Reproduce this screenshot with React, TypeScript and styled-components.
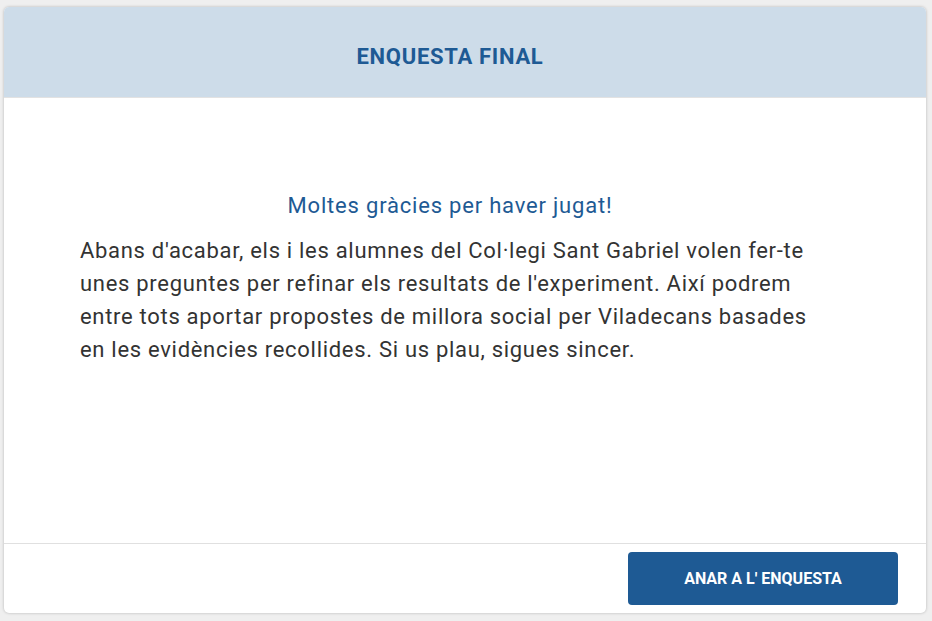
import React from "react";
import styled, { createGlobalStyle } from "styled-components";

const GlobalStyle = createGlobalStyle`
  html, body {
    margin: 0;
    padding: 0;
    background: #efefef;
    font-family: Roboto, "Noto Sans", Arial, sans-serif;
  }
`;

const Page = styled.div`
  width: 932px;
  height: 621px;
  box-sizing: border-box;
  padding: 7px 6px 8px 4px;
`;

const Card = styled.section`
  height: 100%;
  display: flex;
  flex-direction: column;
  background: #fff;
  border-radius: 5px;
  box-shadow: 0 0 3px rgba(0, 0, 0, 0.25);
  overflow: hidden;
`;

const Header = styled.header`
  height: 91px;
  flex: none;
  box-sizing: border-box;
  display: flex;
  align-items: center;
  padding: 8px 0 0 76px;
  background: #cddce9;
  border-bottom: 1px solid #e2e2e2;
`;

const Column = styled.div`
  width: 740px;
`;

const Title = styled.h1`
  margin: 0;
  text-align: center;
  font-size: 22px;
  font-weight: 700;
  letter-spacing: 0.7px;
  color: #1e5a94;
`;

const Body = styled.div`
  flex: 1;
  padding: 94px 0 0 76px;
`;

const Subtitle = styled.h2`
  margin: 0 0 14px;
  text-align: center;
  font-size: 22px;
  font-weight: 400;
  line-height: 28px;
  letter-spacing: 0.8px;
  color: #1e5a94;
`;

const Text = styled.p`
  margin: 0;
  font-size: 22px;
  line-height: 33px;
  letter-spacing: 0.7px;
  color: #333;
`;

const Footer = styled.footer`
  flex: none;
  display: flex;
  justify-content: flex-end;
  padding: 8px 28px 8px 0;
  border-top: 1px solid #e0e0e0;
`;

const Button = styled.button`
  width: 270px;
  height: 53px;
  border: none;
  border-radius: 4px;
  background: #1e5a94;
  color: #fff;
  font-family: Roboto, "Noto Sans", Arial, sans-serif;
  font-size: 16px;
  font-weight: 700;
  cursor: pointer;
`;

const App = () => (
  <>
    <GlobalStyle />
    <Page>
      <Card>
        <Header>
          <Column>
            <Title>ENQUESTA FINAL</Title>
          </Column>
        </Header>
        <Body>
          <Column>
            <Subtitle>Moltes gràcies per haver jugat!</Subtitle>
            <Text>
              Abans d'acabar, els i les alumnes del Col·legi Sant Gabriel volen
              fer-te unes preguntes per refinar els resultats de l'experiment.
              Així podrem entre tots aportar propostes de millora social per
              Viladecans basades en les evidències recollides. Si us plau,
              sigues sincer.
            </Text>
          </Column>
        </Body>
        <Footer>
          <Button>ANAR A L' ENQUESTA</Button>
        </Footer>
      </Card>
    </Page>
  </>
);

export default App;
